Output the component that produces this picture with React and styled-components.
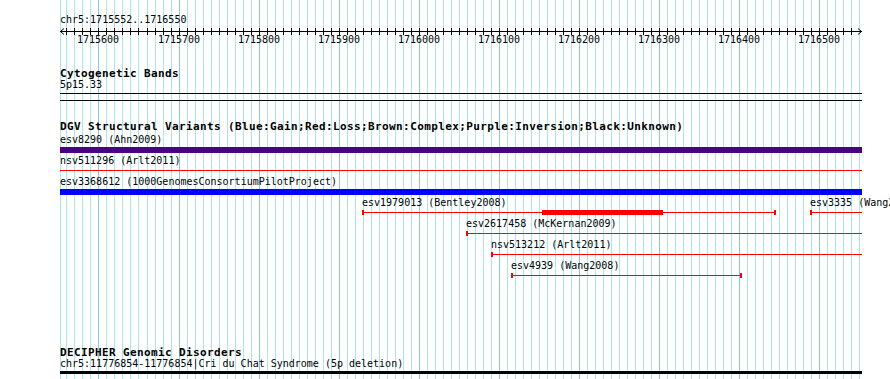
import styled, { createGlobalStyle } from "styled-components";

const START = 1715552;
const END = 1716550;
const SCALE = 0.801;
const WIDTH = 802;
const HEIGHT = 379;

const toX = (bp) => Math.round((bp - START) * SCALE);

const GlobalStyle = createGlobalStyle`
  html, body {
    margin: 0;
    background: #fff;
    overflow: hidden;
  }
  body {
    font-family: "DejaVu Sans Mono", "Liberation Mono", monospace;
    color: #000;
  }
`;

const fullTrack = [
  { id: "esv8290", study: "Ahn2009", kind: "bar", color: "#4b0082" },
  { id: "nsv511296", study: "Arlt2011", kind: "line", color: "#ff0000" },
  {
    id: "esv3368612",
    study: "1000GenomesConsortiumPilotProject",
    kind: "bar",
    color: "#0000ff",
  },
];

const stacked = [
  [
    {
      id: "esv1979013",
      study: "Bentley2008",
      start: 1715929,
      end: 1716446,
      thickStart: 1716154,
      thickEnd: 1716305,
    },
    { id: "esv3335", study: "Wang2008", start: 1716488, end: 1717200 },
  ],
  [{ id: "esv2617458", study: "McKernan2009", start: 1716059, end: 1717300 }],
  [{ id: "nsv513212", study: "Arlt2011", start: 1716090, end: 1717100 }],
  [{ id: "esv4939", study: "Wang2008", start: 1716115, end: 1716403 }],
];

const range = (from, to, step) => {
  const out = [];
  for (let v = from; v <= to; v += step) out.push(v);
  return out;
};

const minorMarks = range(1715550, 1716550, 10);
const majorMarks = range(1715600, 1716500, 100);

const Grid = () => (
  <GridSvg width={WIDTH} height={HEIGHT}>
    {minorMarks.map((bp) => {
      const x = Math.max(0, toX(bp)) + 0.5;
      const major = bp % 100 === 0;
      return (
        <line
          key={bp}
          x1={x}
          x2={x}
          y1={0}
          y2={HEIGHT}
          stroke={major ? "#8ec4ea" : "#ade6ea"}
          strokeWidth={1}
        />
      );
    })}
  </GridSvg>
);

const Ruler = () => (
  <RulerBlock>
    <RulerTitle>chr5:1715552..1716550</RulerTitle>
    <RulerSvg width={WIDTH} height={9}>
      <line x1={0} x2={WIDTH} y1={5.5} y2={5.5} stroke="#000" />
      {minorMarks.map((bp) => {
        const x = toX(bp) + 0.5;
        if (x < 3 || x > WIDTH - 3) return null;
        return <line key={bp} x1={x} x2={x} y1={2} y2={9} stroke="#000" />;
      })}
      <polyline points="4,2.5 0.5,5.5 4,8.5" fill="none" stroke="#000" />
      <polyline
        points={`${WIDTH - 4},2.5 ${WIDTH - 0.5},5.5 ${WIDTH - 4},8.5`}
        fill="none"
        stroke="#000"
      />
    </RulerSvg>
    <TickLabels>
      {majorMarks.map((bp) => (
        <TickLabel key={bp} style={{ left: toX(bp) }}>
          {bp}
        </TickLabel>
      ))}
    </TickLabels>
  </RulerBlock>
);

const Glyph = ({ f }) => {
  const startsIn = f.start >= START;
  const endsIn = f.end <= END;
  const x0 = Math.max(0, toX(f.start));
  const x1 = Math.min(WIDTH, toX(f.end));
  const w = x1 - x0;
  return (
    <Feature style={{ left: x0 }}>
      <FeatureLabel>
        {f.id} ({f.study})
      </FeatureLabel>
      <svg width={w} height={11} style={{ display: "block" }}>
        <rect x={0} y={4} width={w} height={1} fill="#ff0000" />
        {f.thickStart && (
          <rect
            x={toX(f.thickStart) - x0}
            y={2}
            width={toX(f.thickEnd) - toX(f.thickStart)}
            height={5}
            fill="#ff0000"
          />
        )}
        {startsIn && <rect x={0} y={2} width={2} height={5} fill="#ff0000" />}
        {endsIn && <rect x={w - 2} y={2} width={2} height={5} fill="#ff0000" />}
      </svg>
    </Feature>
  );
};

const App = () => (
  <>
    <GlobalStyle />
    <Page>
      <Panel>
        <Grid />
        <Content>
          <Ruler />

          <Track $top={23}>
            <TrackTitle>Cytogenetic Bands</TrackTitle>
            <ItemLabel>5p15.33</ItemLabel>
            <Band />
          </Track>

          <Track $top={20}>
            <TrackTitle>
              DGV Structural Variants
              (Blue:Gain;Red:Loss;Brown:Complex;Purple:Inversion;Black:Unknown)
            </TrackTitle>
            <Rows>
              {fullTrack.map((f) => (
                <Row key={f.id}>
                  <ItemLabel>
                    {f.id} ({f.study})
                  </ItemLabel>
                  <FullBar $kind={f.kind} $color={f.color} />
                </Row>
              ))}
              {stacked.map((row, i) => (
                <Row key={i}>
                  {row.map((f) => (
                    <Glyph key={f.id} f={f} />
                  ))}
                </Row>
              ))}
            </Rows>
          </Track>

          <Track $top={64}>
            <TrackTitle $lh={13}>DECIPHER Genomic Disorders</TrackTitle>
            <ItemLabel>
              chr5:11776854-11776854|Cri du Chat Syndrome (5p deletion)
            </ItemLabel>
            <Disorder />
          </Track>
        </Content>
      </Panel>
    </Page>
  </>
);

export default App;

const Page = styled.div`
  display: flex;
  padding-left: 60px;
  height: ${HEIGHT}px;
`;

const Panel = styled.div`
  position: relative;
  width: ${WIDTH}px;
  height: ${HEIGHT}px;
`;

const GridSvg = styled.svg`
  position: absolute;
  top: 0;
  left: 0;
  display: block;
`;

const Content = styled.div`
  position: relative;
  display: flex;
  flex-direction: column;
`;

const RulerBlock = styled.div`
  display: flex;
  flex-direction: column;
  padding-top: 15px;
`;

const RulerTitle = styled.div`
  font-size: 10px;
  line-height: 10px;
  white-space: nowrap;
`;

const RulerSvg = styled.svg`
  display: block;
  margin-top: 1px;
`;

const TickLabels = styled.div`
  position: relative;
  height: 10px;
`;

const TickLabel = styled.span`
  position: absolute;
  top: 0;
  transform: translateX(-50%);
  font-size: 10px;
  line-height: 10px;
  white-space: nowrap;
`;

const Track = styled.section`
  display: flex;
  flex-direction: column;
  margin-top: ${(p) => p.$top}px;
`;

const TrackTitle = styled.div`
  font-size: 11px;
  line-height: ${(p) => p.$lh || 12}px;
  font-weight: bold;
  letter-spacing: 0.38px;
  white-space: nowrap;
`;

const ItemLabel = styled.div`
  font-size: 10px;
  line-height: 10px;
  white-space: nowrap;
`;

const Band = styled.div`
  margin-top: 3px;
  height: 6px;
  border-top: 1px solid #000;
  border-bottom: 1px solid #000;
`;

const Rows = styled.div`
  display: flex;
  flex-direction: column;
  margin-top: 2px;
`;

const Row = styled.div`
  position: relative;
  height: 21px;
`;

const FullBar = styled.div`
  margin-top: ${(p) => (p.$kind === "bar" ? 2 : 4)}px;
  height: ${(p) => (p.$kind === "bar" ? 6 : 1)}px;
  background: ${(p) => p.$color};
`;

const Feature = styled.div`
  position: absolute;
  top: 0;
`;

const FeatureLabel = styled.div`
  font-size: 10px;
  line-height: 10px;
  white-space: nowrap;
`;

const Disorder = styled.div`
  margin-top: 2px;
  height: 3px;
  background: #000;
`;
